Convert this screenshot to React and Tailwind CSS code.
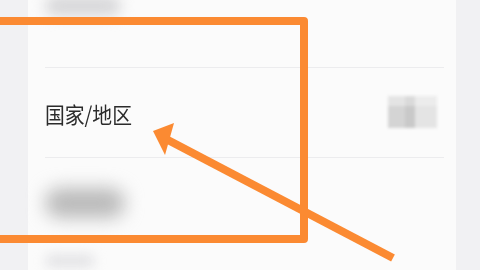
const App = () => {
  return (
    <div
      className="relative w-[480px] h-[270px] overflow-hidden bg-[#f1f1f3]"
      style={{ fontFamily: '"Noto Sans CJK SC", "Noto Sans", sans-serif' }}
    >
      <div className="ml-[28px] mr-[24px] h-full bg-[#fbfbfb]">
        {/* previous item, cut off at the top */}
        <div className="h-[67px] px-[17px]">
          <div className="-translate-y-[4px] w-[76px] h-[20px] rounded-full bg-[#d6d6d8] blur-[7px]"></div>
        </div>
        <div className="mx-[17px] mr-[12px] h-px bg-[#ececee]"></div>

        <div className="h-[89px] pl-[17px] pr-[19px] flex items-center justify-between">
          <span className="text-[22px] leading-none text-[#2b2b2b] scale-x-[0.9] origin-left">国家/地区</span>
          <div className="-mt-[1px] grid grid-cols-[17px_10px_22px] grid-rows-[10px_22px] blur-[1.5px]">
            <div className="bg-[#e4e4e4]"></div>
            <div className="bg-[#dadada]"></div>
            <div className="bg-[#ececec]"></div>
            <div className="bg-[#d4d4d4]"></div>
            <div className="bg-[#c9c9c9]"></div>
            <div className="bg-[#e4e4e4]"></div>
          </div>
        </div>
        <div className="mx-[17px] mr-[12px] h-px bg-[#ececee]"></div>

        <div className="h-[90px] px-[17px] flex items-center">
          <div className="w-[80px] h-[30px] rounded-full bg-[#bababa] blur-[9px]"></div>
        </div>
        <div className="px-[17px] pt-[6px]">
          <div className="w-[50px] h-[14px] rounded-full bg-[#e4e4e6] blur-[6px]"></div>
        </div>
      </div>

      {/* annotation box */}
      <div className="absolute left-[-20px] top-[17px] w-[328px] h-[226px] border-[8px] border-[#fb8a32] rounded-[4px]"></div>

      {/* annotation arrow */}
      <svg className="absolute inset-0 pointer-events-none" width="480" height="270" viewBox="0 0 480 270">
        <line x1="166" y1="139" x2="393" y2="258" stroke="#fb8a32" strokeWidth="8" />
        <polygon points="153,131 174,123 165,155" fill="#fb8a32" />
      </svg>
    </div>
  );
};

export default App;
